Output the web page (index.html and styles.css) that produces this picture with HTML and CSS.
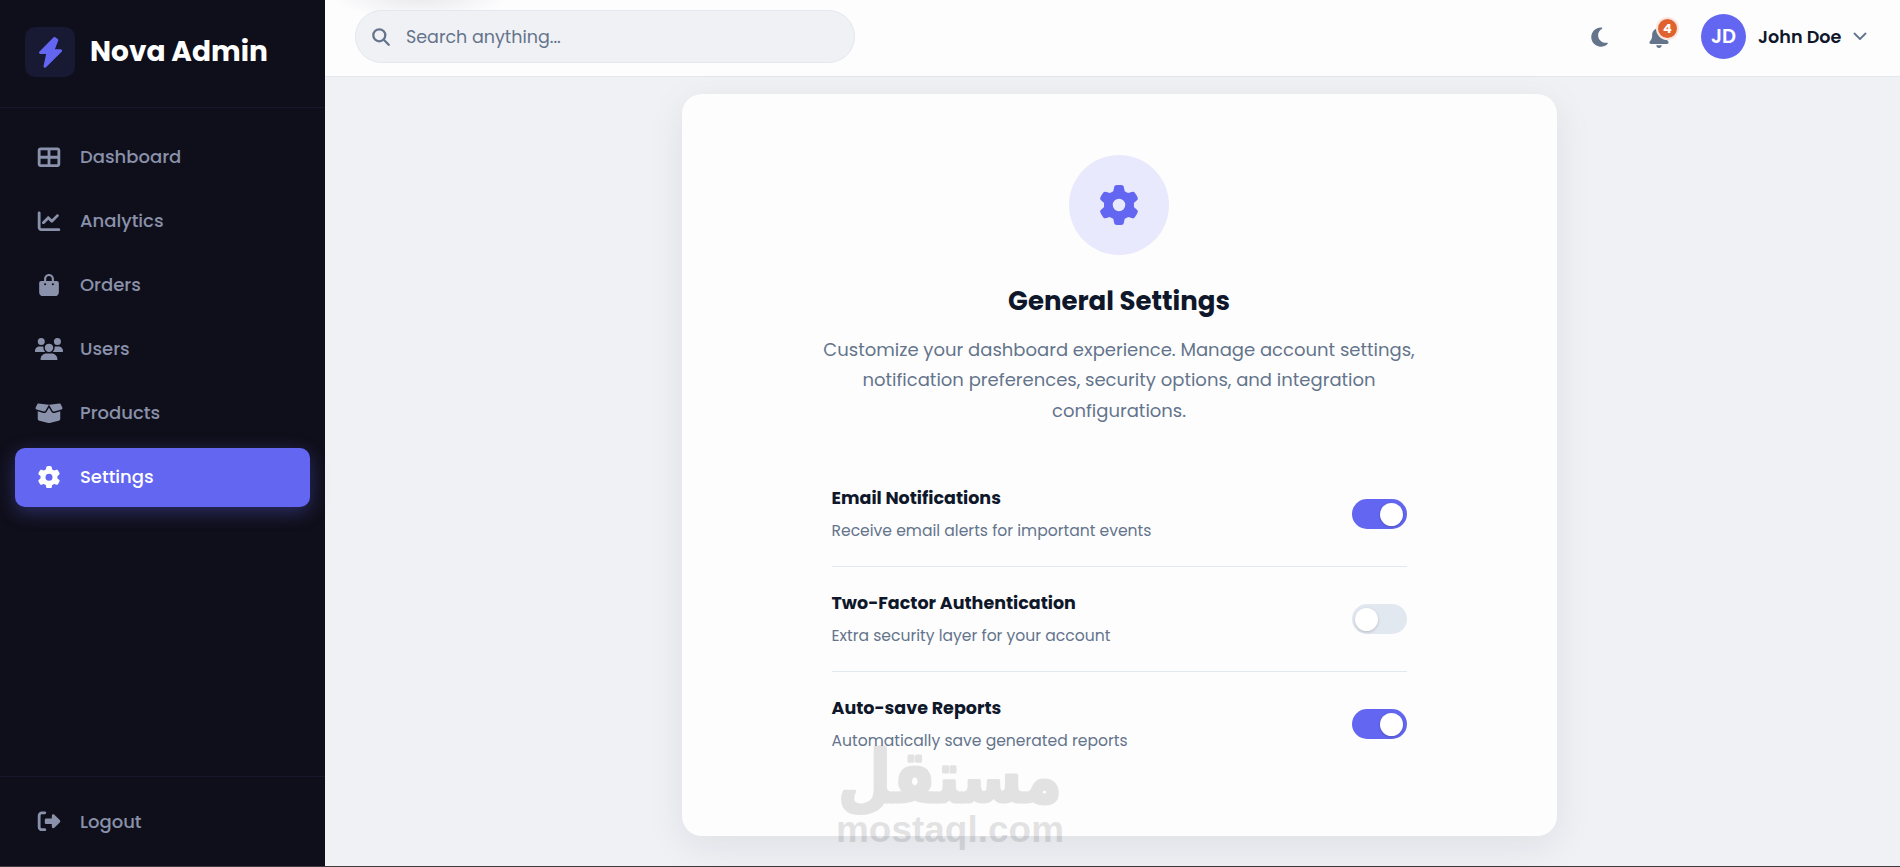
FILE: index.html
```
<!DOCTYPE html>
<html lang="en">
<head>
    <meta charset="UTF-8">
    <title>Nova Admin</title>
    <link rel="stylesheet" href="styles.css">
</head>
<body>
    <div class="layout">
        <aside class="sidebar">
            <div class="brand">
                <div class="brand-icon">
                    <svg width="23" height="31" viewBox="0 0 23 31"><path d="M15.5 1.5 1.6 15.6H9L6 29.3 21.6 13.7H13.7L17.8 3.2Z" fill="#6366f1" stroke="#6366f1" stroke-width="3" stroke-linejoin="round"/></svg>
                </div>
                <span class="brand-name">Nova Admin</span>
            </div>

            <nav class="nav">
                <a class="nav-item">
                    <svg class="nav-icon" viewBox="0 0 512 512"><path fill-rule="evenodd" d="M448 96V224H288V96H448zm0 192V416H288V288H448zM224 224H64V96H224V224zM64 288H224V416H64V288zM64 32C28.700 32 0 60.700 0 96V416c0 35.300 28.700 64 64 64H448c35.300 0 64-28.700 64-64V96c0-35.300-28.700-64-64-64H64z"/></svg>
                    <span class="nav-text">Dashboard</span>
                </a>
                <a class="nav-item">
                    <svg class="nav-icon" viewBox="0 0 512 512"><path d="M64 64c0-17.700-14.300-32-32-32S0 46.300 0 64V400c0 44.200 35.800 80 80 80H480c17.700 0 32-14.300 32-32s-14.300-32-32-32H80c-8.800 0-16-7.200-16-16V64zm406.600 86.600c12.500-12.500 12.500-32.800 0-45.300s-32.800-12.500-45.300 0L320 210.700l-57.400-57.400c-12.500-12.500-32.800-12.500-45.300 0l-112 112c-12.500 12.500-12.500 32.800 0 45.300s32.800 12.500 45.300 0L240 221.300l57.400 57.400c12.500 12.500 32.800 12.500 45.300 0l128-128z"/></svg>
                    <span class="nav-text">Analytics</span>
                </a>
                <a class="nav-item">
                    <svg class="nav-icon" viewBox="0 0 448 512"><path d="M160 112c0-35.300 28.700-64 64-64s64 28.700 64 64v48H160V112zm-48 48H48c-26.500 0-48 21.500-48 48V416c0 53 43 96 96 96H352c53 0 96-43 96-96V208c0-26.500-21.500-48-48-48H336V112C336 50.100 285.900 0 224 0S112 50.100 112 112v48zm24 48a24 24 0 1 1 0 48 24 24 0 1 1 0-48zm152 24a24 24 0 1 1 48 0 24 24 0 1 1-48 0z"/></svg>
                    <span class="nav-text">Orders</span>
                </a>
                <a class="nav-item">
                    <svg class="nav-icon" viewBox="0 0 640 512"><path d="M144 0a80 80 0 1 1 0 160A80 80 0 1 1 144 0zM512 0a80 80 0 1 1 0 160A80 80 0 1 1 512 0zM0 298.700C0 239.800 47.800 192 106.700 192h42.700c15.900 0 31 3.500 44.600 9.700-1.300 7.200-1.900 14.700-1.900 22.300 0 38.200 16.800 72.500 43.300 96H21.300C9.600 320 0 310.400 0 298.700zM405.300 320h-.7c26.600-23.500 43.300-57.800 43.300-96 0-7.600-.7-15-1.900-22.300 13.600-6.300 28.700-9.700 44.600-9.700h42.700C592.200 192 640 239.800 640 298.700c0 11.800-9.600 21.300-21.300 21.300H405.300zM224 224a96 96 0 1 1 192 0 96 96 0 1 1-192 0zM128 485.300C128 411.700 187.700 352 261.300 352H378.700C452.300 352 512 411.700 512 485.300c0 14.700-11.900 26.700-26.700 26.700H154.700c-14.700 0-26.700-11.900-26.700-26.700z"/></svg>
                    <span class="nav-text">Users</span>
                </a>
                <a class="nav-item">
                    <svg class="nav-icon" viewBox="0 0 640 512"><path d="M58.900 42.100c3-6.100 9.600-9.600 16.300-8.700L320 64 564.800 33.400c6.700-.8 13.300 2.700 16.300 8.700l41.700 83.400c9 17.900-.6 39.600-19.800 45.100L439.600 217.300c-13.900 4-28.800-1.900-36.200-14.300L320 64 236.600 203c-7.400 12.400-22.300 18.300-36.200 14.300L37.100 170.600c-19.300-5.500-28.800-27.200-19.800-45.100L58.900 42.100zM321.100 128l54.900 91.400c14.900 24.800 44.600 36.600 72.500 28.600L576 211.600v167c0 22-15 41.200-36.400 46.600l-204.100 51c-10.200 2.600-20.900 2.600-31 0l-204.100-51C79 419.700 64 400.500 64 378.500v-167L191.600 248c27.800 8 57.600-3.800 72.500-28.600L318.900 128h2.200z"/></svg>
                    <span class="nav-text">Products</span>
                </a>
                <a class="nav-item active">
                    <svg class="nav-icon" viewBox="0 0 512 512"><use href="#gear"/></svg>
                    <span class="nav-text">Settings</span>
                </a>
            </nav>

            <div class="sidebar-footer">
                <a class="nav-item">
                    <svg class="nav-icon" viewBox="0 0 512 512"><path d="M377.900 105.900 500.700 228.700c7.200 7.200 11.300 17.100 11.300 27.300s-4.100 20.100-11.300 27.300L377.900 406.100c-6.400 6.400-15 9.900-24 9.900-18.700 0-33.900-15.200-33.900-33.900V320H192c-17.700 0-32-14.300-32-32V224c0-17.700 14.300-32 32-32H320V129.900c0-18.700 15.200-33.900 33.900-33.900 9 0 17.600 3.600 24 9.900zM160 96H96c-17.700 0-32 14.300-32 32V384c0 17.700 14.300 32 32 32h64c17.700 0 32 14.300 32 32s-14.300 32-32 32H96c-53 0-96-43-96-96V128C0 75 43 32 96 32h64c17.700 0 32 14.300 32 32s-14.300 32-32 32z"/></svg>
                    <span class="nav-text">Logout</span>
                </a>
            </div>
        </aside>

        <main class="main">
            <header class="header">
                <div class="search">
                    <svg width="18" height="18" viewBox="0 0 18 18" fill="none" stroke="#64748b" stroke-width="2.300" stroke-linecap="round"><circle cx="7.300" cy="7.300" r="6"/><path d="m11.800 11.800 4.900 4.900"/></svg>
                    <span class="search-text">Search anything...</span>
                </div>
                <div class="header-actions">
                    <svg class="moon" viewBox="0 0 384 512"><path d="M223.500 32C100 32 0 132.300 0 256S100 480 223.500 480c60.600 0 115.500-24.200 155.800-63.400 5-4.900 6.300-12.500 3.100-18.700s-10.100-9.700-17-8.500c-9.800 1.700-19.800 2.600-30.100 2.600-96.900 0-175.500-78.800-175.500-176 0-65.800 36-123.100 89.300-153.300 6.100-3.500 9.200-10.500 7.700-17.300s-7.300-11.900-14.300-12.500c-6.300-.5-12.600-.8-19-.8z"/></svg>
                    <div class="bell">
                        <svg class="bell-icon" viewBox="0 0 448 512"><path d="M224 0c-17.700 0-32 14.300-32 32V51.200C119 66 64 130.600 64 208v18.800c0 47-17.300 92.400-48.500 127.600l-7.400 8.300c-8.400 9.400-10.400 22.900-5.300 34.400S19.400 416 32 416H416c12.600 0 24-7.400 29.200-18.900s3.100-25-5.300-34.400l-7.400-8.300C401.300 319.200 384 273.900 384 226.800V208c0-77.400-55-142-128-156.800V32c0-17.700-14.300-32-32-32zm45.300 493.300c12-12 18.700-28.300 18.700-45.300H160c0 17 6.700 33.300 18.700 45.300s28.300 18.700 45.300 18.700 33.300-6.700 45.300-18.700z"/></svg>
                        <span class="badge">4</span>
                    </div>
                    <div class="profile">
                        <div class="avatar">JD</div>
                        <span class="profile-name">John Doe</span>
                        <svg width="14" height="9" viewBox="0 0 14 9" fill="none" stroke="#64748b" stroke-width="1.800" stroke-linecap="round" stroke-linejoin="round"><path d="m1.500 1.500 5.500 5.500 5.500-5.500"/></svg>
                    </div>
                </div>
            </header>

            <section class="content">
                <div class="card">
                    <div class="card-icon">
                        <svg width="40" height="40" viewBox="0 0 512 512"><path id="gear" d="M495.900 166.600c3.200 8.700.5 18.400-6.400 24.600l-43.300 39.400c1.100 8.300 1.700 16.800 1.700 25.400s-.6 17.100-1.700 25.400l43.300 39.400c6.900 6.200 9.600 15.900 6.400 24.600-4.400 11.900-9.700 23.300-15.800 34.300l-4.700 8.100c-6.600 11-14 21.400-22.100 31.200-5.900 7.200-15.700 9.600-24.500 6.800l-55.700-17.700c-13.400 10.300-28.200 18.900-44 25.400l-12.500 57.100c-2 9.100-9 16.300-18.200 17.800-13.800 2.300-28 3.500-42.500 3.500s-28.700-1.200-42.500-3.500c-9.200-1.500-16.200-8.700-18.200-17.800l-12.500-57.100c-15.800-6.500-30.600-15.100-44-25.400L83.100 425.900c-8.800 2.800-18.600.3-24.500-6.800-8.100-9.800-15.500-20.200-22.100-31.200l-4.700-8.100c-6.100-11-11.400-22.400-15.800-34.300-3.200-8.700-.5-18.400 6.400-24.600l43.300-39.400C64.600 273.100 64 264.600 64 256s.6-17.100 1.700-25.400L22.400 191.200c-6.900-6.200-9.600-15.900-6.400-24.600 4.400-11.900 9.700-23.300 15.800-34.300l4.700-8.100c6.600-11 14-21.400 22.100-31.200 5.900-7.200 15.700-9.600 24.500-6.800l55.700 17.700c13.400-10.300 28.200-18.900 44-25.400l12.500-57.100c2-9.100 9-16.300 18.200-17.800C227.300 1.200 241.500 0 256 0s28.700 1.200 42.500 3.500c9.200 1.500 16.200 8.700 18.200 17.800l12.500 57.100c15.800 6.500 30.600 15.100 44 25.400l55.700-17.700c8.800-2.800 18.600-.3 24.500 6.800 8.100 9.800 15.500 20.200 22.100 31.200l4.700 8.100c6.100 11 11.400 22.400 15.800 34.300zM256 336a80 80 0 1 0 0-160 80 80 0 1 0 0 160z"/></svg>
                    </div>
                    <h2 class="card-title">General Settings</h2>
                    <p class="card-text">Customize your dashboard experience. Manage account settings,<br>notification preferences, security options, and integration<br>configurations.</p>

                    <div class="settings">
                        <div class="setting">
                            <div>
                                <h4 class="setting-title">Email Notifications</h4>
                                <p class="setting-text">Receive email alerts for important events</p>
                            </div>
                            <div class="toggle on"></div>
                        </div>
                        <div class="setting">
                            <div>
                                <h4 class="setting-title">Two-Factor Authentication</h4>
                                <p class="setting-text">Extra security layer for your account</p>
                            </div>
                            <div class="toggle"></div>
                        </div>
                        <div class="setting">
                            <div>
                                <h4 class="setting-title">Auto-save Reports</h4>
                                <p class="setting-text">Automatically save generated reports</p>
                            </div>
                            <div class="toggle on"></div>
                        </div>
                    </div>
                </div>
            </section>
        </main>
    </div>

    <svg class="watermark" width="240" height="140" viewBox="0 0 240 140">
        <text class="watermark-ar" x="232" y="82" textLength="224" lengthAdjust="spacingAndGlyphs">مستقل</text>
        <text class="watermark-en" x="6" y="122" textLength="228" lengthAdjust="spacingAndGlyphs">mostaql.com</text>
    </svg>
</body>
</html>
```
FILE: styles.css
```
* {
    margin: 0;
    padding: 0;
    box-sizing: border-box;
}
body {
    font-family: Poppins, Inter, sans-serif;
    background: #f0f1f5;
    color: #0f172a;
    height: 867px;
    overflow: hidden;
}
.layout {
    display: flex;
    height: 867px;
    border-bottom: 1px solid #3f3a40;
}
.sidebar {
    width: 325px;
    flex-shrink: 0;
    display: flex;
    flex-direction: column;
    background: #0f0f1b;
}
.brand {
    display: flex;
    align-items: center;
    gap: 15px;
    height: 108px;
    padding: 0 25px 3px;
    border-bottom: 1px solid #17172b;
}
.brand-icon {
    width: 50px;
    height: 50px;
    display: flex;
    align-items: center;
    justify-content: center;
    background: #181932;
    border-radius: 10px;
}
.brand-name {
    font-size: 28px;
    font-weight: 700;
    color: #fff;
    white-space: nowrap;
}
.nav {
    flex: 1;
    display: flex;
    flex-direction: column;
    gap: 5px;
    padding: 19.5px 15px;
}
.nav-item {
    display: flex;
    align-items: center;
    gap: 16.5px;
    height: 59px;
    padding: 0 18.5px;
    border-radius: 10px;
    color: #8a91aa;
}
.nav-item.active {
    background: #6366f1;
    color: #fff;
    box-shadow: 0 5px 18px rgba(99, 102, 241, 0.35);
}
.nav-icon {
    width: 30px;
    height: 22.5px;
    fill: currentColor;
}
.nav-text {
    font-size: 18px;
    font-weight: 500;
    line-height: 26px;
}
.sidebar-footer {
    height: 90px;
    padding: 15px;
    border-top: 1px solid #17172b;
}
.main {
    flex: 1;
    display: flex;
    flex-direction: column;
}
.header {
    height: 77px;
    display: flex;
    align-items: center;
    justify-content: space-between;
    padding: 0 33px 3px 30px;
    background: radial-gradient(ellipse 90px 26px at 95px -6px, #e7e7eb, #fdfdfe);
    border-bottom: 1px solid #e2e8f0;
}
.search {
    width: 500px;
    height: 53px;
    display: flex;
    align-items: center;
    gap: 16px;
    padding: 0 16px;
    background: #f0f1f5;
    border: 1px solid #e2e8f0;
    border-radius: 27px;
}
.search-text {
    font-size: 17.5px;
    color: #64748b;
}
.header-actions {
    display: flex;
    align-items: center;
}
.moon {
    width: 17px;
    height: 22px;
    margin-right: 41px;
    fill: #64748b;
}
.bell {
    position: relative;
    display: flex;
    margin-right: 32px;
}
.bell-icon {
    width: 20px;
    height: 22px;
    fill: #64748b;
}
.badge {
    position: absolute;
    left: 7px;
    top: -9px;
    width: 23px;
    height: 23px;
    border: 2px solid #fbe6df;
    border-radius: 50%;
    background: #e0632f;
    color: #fff;
    font-size: 13px;
    font-weight: 700;
    line-height: 19px;
    text-align: center;
}
.profile {
    display: flex;
    align-items: center;
}
.avatar {
    width: 45px;
    height: 45px;
    border-radius: 50%;
    background: #6366f1;
    color: #fff;
    font-size: 19.5px;
    font-weight: 600;
    line-height: 45px;
    text-align: center;
}
.profile-name {
    width: 82px;
    margin: 0 13px 0 12px;
    font-size: 17.6px;
    font-weight: 600;
    white-space: nowrap;
}
.content {
    flex: 1;
    padding: 17px 0 0 13px;
}
.card {
    width: 875px;
    height: 742px;
    margin: 0 auto;
    padding-top: 61px;
    background: #fdfdfe;
    border-radius: 20px;
    box-shadow: 0 10px 38px rgba(15, 23, 42, 0.08);
    text-align: center;
}
.card-icon {
    width: 100px;
    height: 100px;
    margin: 0 auto 26px;
    display: flex;
    align-items: center;
    justify-content: center;
    background: #e9e9fd;
    border-radius: 50%;
    fill: #6366f1;
}
.card-title {
    font-size: 26px;
    font-weight: 700;
    line-height: 40px;
}
.card-text {
    margin-top: 14px;
    font-size: 18px;
    line-height: 30.4px;
    color: #64748b;
}
.settings {
    width: 575px;
    margin: 36px auto 0;
    text-align: left;
}
.setting {
    height: 105px;
    display: flex;
    align-items: center;
    justify-content: space-between;
    border-bottom: 1px solid #e2e8f0;
}
.setting:last-child {
    border-bottom-color: transparent;
}
.setting-title {
    font-size: 17.5px;
    font-weight: 700;
    line-height: 28px;
}
.setting-text {
    margin-top: 5px;
    font-size: 15.6px;
    line-height: 28px;
    color: #64748b;
}
.toggle {
    display: flex;
    align-items: center;
    width: 55px;
    height: 30px;
    padding: 0 4px 0 3px;
    border-radius: 15px;
    background: #e2e8f0;
}
.toggle::before {
    content: "";
    width: 23px;
    height: 23px;
    border-radius: 50%;
    background: #fff;
    box-shadow: 0 1px 3px rgba(0, 0, 0, 0.2);
}
.toggle.on {
    justify-content: flex-end;
    background: #6366f1;
}
.watermark {
    position: absolute;
    left: 830px;
    top: 720px;
    overflow: visible;
    fill: #000;
    opacity: 0.1;
}
.watermark-ar {
    font-family: "DejaVu Sans", sans-serif;
    font-size: 72px;
    font-weight: 700;
    direction: rtl;
    stroke: #000;
    stroke-width: 3px;
    stroke-linejoin: round;
}
.watermark-en {
    font-family: "Liberation Sans", sans-serif;
    font-size: 36px;
    font-weight: 700;
}
```
